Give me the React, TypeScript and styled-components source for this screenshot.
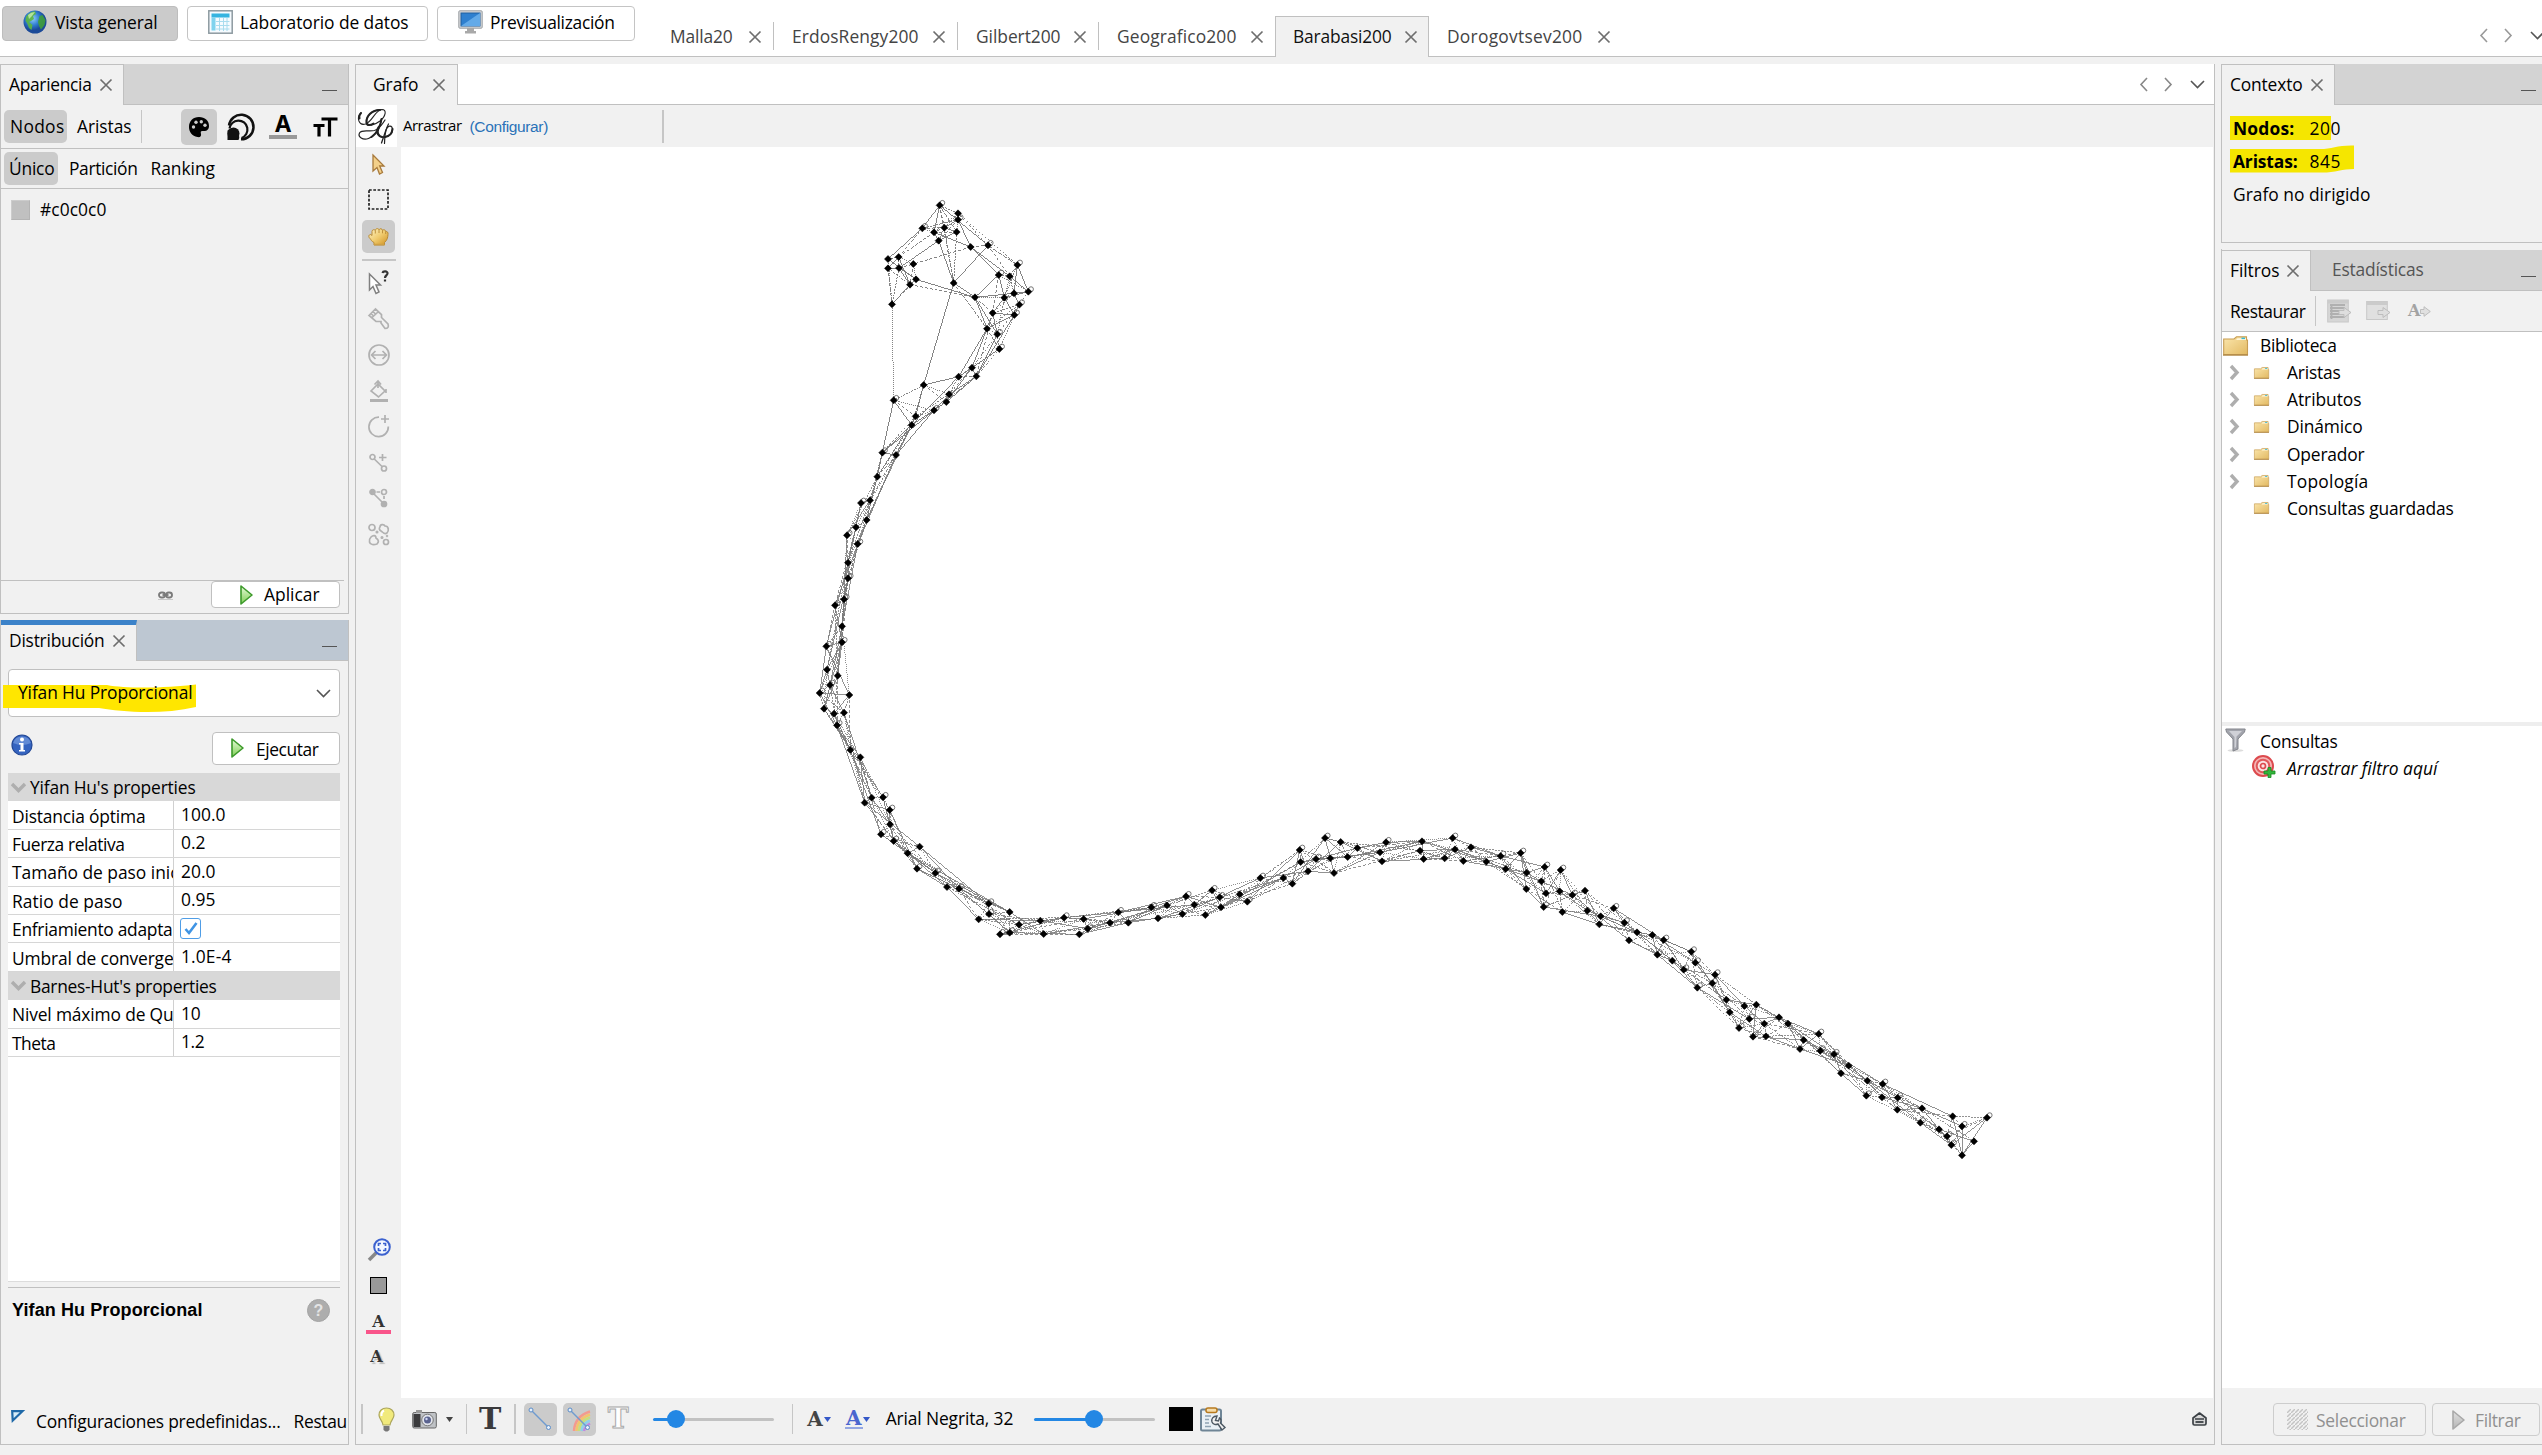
import React, { useLayoutEffect, useRef, useState } from "react";
import styled, { createGlobalStyle } from "styled-components";

const LINE = "#c0c0c0";
const BG = "#f1f1f1";

const Global = createGlobalStyle`
  *, *::before, *::after { box-sizing: border-box; }
  html, body { margin: 0; padding: 0; background: ${BG}; }
  body { overflow: hidden; font-family: "Open Sans", "Noto Sans", sans-serif; font-size: 17.4px; color: #000; }
  svg { display: block; flex: none; overflow: visible; }
`;

/* ---------- text ---------- */

type LabelStyle = { $ml?: number; $color?: string; $bold?: boolean; $italic?: boolean; $arial?: boolean; $size?: number; $dy?: number };

const Text = styled.span<LabelStyle>`
  flex: none;
  white-space: pre;
  line-height: 24px;
  margin-left: ${p => p.$ml ?? 0}px;
  margin-top: ${p => (p.$dy ?? 0) * 2 - 2}px;
  color: ${p => p.$color ?? "#000"};
  font-weight: ${p => (p.$bold ? 700 : 400)};
  font-style: ${p => (p.$italic ? "italic" : "normal")};
  font-size: ${p => p.$size ?? 17.4}px;
  font-family: ${p => (p.$arial ? '"Liberation Sans", Arial, sans-serif' : '"Open Sans", "Noto Sans", sans-serif')};
`;

/* Spreads its letters so that the string takes exactly w pixels. */
function Label({ w, children, ...rest }: LabelStyle & { w: number; children: string }) {
  const ref = useRef<HTMLSpanElement>(null);
  const [spacing, setSpacing] = useState(0);
  useLayoutEffect(() => {
    const el = ref.current;
    if (!el) return;
    const natural = el.getBoundingClientRect().width - spacing * children.length;
    setSpacing((w + 1.5 - natural) / children.length);
  }, [w, children]);
  return (
    <Text ref={ref} {...rest} style={{ letterSpacing: spacing }}>
      {children}
    </Text>
  );
}

/* ---------- shell ---------- */

const Window = styled.div`
  width: 2542px;
  height: 1455px;
  display: flex;
  flex-direction: column;
  overflow: hidden;
  background: ${BG};
`;

const TopBar = styled.header`
  height: 57px;
  flex: none;
  display: flex;
  align-items: flex-start;
  background: #fff;
  box-shadow: inset 0 -1px 0 ${LINE};
`;

const ModeButton = styled.button<{ $w: number; $active?: boolean; $ml: number; $pl: number }>`
  flex: none;
  display: flex;
  align-items: center;
  width: ${p => p.$w}px;
  height: 35px;
  margin: 6px 0 0 ${p => p.$ml}px;
  padding: 0 0 3px ${p => p.$pl}px;
  border: 1.5px solid ${p => (p.$active ? "#bdbdbd" : "#c4c4c4")};
  border-radius: 4px;
  background: ${p => (p.$active ? "#cbcbcb" : "#fff")};
`;

const DocTab = styled.div<{ $w: number; $active?: boolean; $sep?: boolean; $pl: number }>`
  position: relative;
  flex: none;
  display: flex;
  align-items: center;
  width: ${p => p.$w}px;
  height: 41px;
  margin-top: 16px;
  padding-left: ${p => p.$pl}px;
  background: ${p => (p.$active ? BG : "transparent")};
  ${p => p.$active && `border: 1px solid ${LINE}; border-bottom: 0;`}
  &::after {
    content: "";
    display: ${p => (p.$sep ? "block" : "none")};
    position: absolute;
    right: 0;
    top: 6px;
    width: 1px;
    height: 28px;
    background: ${LINE};
  }
`;

const Spacer = styled.div`
  flex: 1;
`;

const NavIcons = styled.div<{ $mt?: number; $mr?: number }>`
  flex: none;
  display: flex;
  align-items: center;
  height: 41px;
  margin-top: ${p => p.$mt ?? 0}px;
  margin-right: ${p => p.$mr ?? 0}px;
`;

const Workspace = styled.main`
  display: grid;
  grid-template-columns: 349px 1860px 321px;
  column-gap: 6px;
  height: 1381px;
  margin-top: 7px;
`;

const Column = styled.div`
  display: flex;
  flex-direction: column;
  gap: 6px;
  min-width: 0;
`;

const Panel = styled.section<{ $h?: number; $open?: boolean }>`
  ${p => (p.$h ? `height: ${p.$h}px; flex: none;` : "flex: 1; min-height: 0;")}
  display: flex;
  flex-direction: column;
  overflow: hidden;
  background: ${BG};
  border: 1px solid ${LINE};
  border-top: 0;
  ${p => p.$open && "border-right: 0;"}
`;

const TabStrip = styled.div<{ $bg: string }>`
  flex: none;
  display: flex;
  height: 41px;
  margin: 0 -1px;
  background: ${p => p.$bg};
  box-shadow: inset 0 -1px 0 ${LINE};
`;

const PanelTab = styled.div<{ $w: number; $focused?: boolean }>`
  flex: none;
  display: flex;
  align-items: center;
  width: ${p => p.$w}px;
  height: 41px;
  background: ${BG};
  border: 1px solid ${LINE};
  border-bottom: 0;
  ${p => p.$focused && "border-top: 5px solid #3b82c9; padding-bottom: 4px;"}
`;

const Minimize = styled.i<{ $mr: number }>`
  flex: none;
  width: 15px;
  height: 1px;
  margin: 26px ${p => p.$mr}px 0 auto;
  background: #555;
`;

const ToolRow = styled.div<{ $h: number; $line?: boolean; $pb?: number }>`
  flex: none;
  display: flex;
  align-items: center;
  height: ${p => p.$h}px;
  padding-bottom: ${p => p.$pb ?? 0}px;
  ${p => p.$line && `border-bottom: 1px solid ${LINE};`}
`;

const Toggle = styled.div<{ $w: number; $h?: number; $ml?: number; $on?: boolean; $pl?: number }>`
  flex: none;
  display: flex;
  align-items: center;
  justify-content: ${p => (p.$pl ? "flex-start" : "center")};
  width: ${p => p.$w}px;
  height: ${p => p.$h ?? 33}px;
  margin-left: ${p => p.$ml ?? 0}px;
  padding-left: ${p => p.$pl ?? 0}px;
  border-radius: 5px;
  background: ${p => (p.$on ? "#cbcbcb" : "transparent")};
`;

const VRule = styled.i<{ $ml: number; $h?: number }>`
  flex: none;
  width: 1.5px;
  height: ${p => p.$h ?? 33}px;
  margin-left: ${p => p.$ml}px;
  background: #c6c6c6;
`;

const IconSlot = styled.span<{ $ml?: number; $mt?: number }>`
  flex: none;
  display: flex;
  margin-left: ${p => p.$ml ?? 0}px;
  margin-top: ${p => p.$mt ?? 0}px;
`;

const PushButton = styled.button<{ $w: number; $h: number; $pl: number; $ml?: number; $disabled?: boolean }>`
  flex: none;
  display: flex;
  align-items: center;
  width: ${p => p.$w}px;
  height: ${p => p.$h}px;
  margin-left: ${p => p.$ml ?? 0}px;
  padding: 0 0 0 ${p => p.$pl}px;
  border: 1px solid ${p => (p.$disabled ? "#cdcdcd" : LINE)};
  border-radius: 4px;
  background: ${p => (p.$disabled ? BG : "#fff")};
`;

/* ---------- left column ---------- */

const Swatch = styled.i`
  width: 19px;
  height: 20px;
  margin-left: 10px;
  background: #c0c0c0;
  border: 1px solid #b4b4b4;
  border-top-color: #ccc;
  border-left-color: #ccc;
`;

const ApplyRow = styled.div`
  flex: none;
  display: flex;
  align-items: flex-start;
  height: 33px;
  margin-right: 4px;
  border-top: 1px solid ${LINE};
`;

const Combo = styled.div`
  position: relative;
  flex: none;
  display: flex;
  align-items: center;
  width: 332px;
  height: 48px;
  margin: 8px 0 0 7px;
  border: 1.5px solid ${LINE};
  border-radius: 4px;
  background: #fff;
`;

const Marker = styled.svg<{ $x: number; $y: number }>`
  position: absolute;
  left: ${p => p.$x}px;
  top: ${p => p.$y}px;
`;

const OverMarker = styled.span`
  position: relative;
  display: flex;
`;

const RunRow = styled.div`
  flex: none;
  display: flex;
  align-items: flex-start;
  height: 56px;
  padding: 15px 0 0 10px;
`;

const Sheet = styled.div`
  flex: none;
  width: 332px;
  height: 509px;
  margin-left: 7px;
  background: #fff;
  border-bottom: 1px solid #dcdcdc;
`;

const GroupRow = styled.div`
  display: flex;
  align-items: center;
  height: 28.4px;
  padding-left: 3px;
  background: #d8d8d8;
`;

const PropRow = styled.div`
  display: grid;
  grid-template-columns: 166px 1fr;
  height: 28.4px;
  border-bottom: 1px solid #d6d6d6;
`;

const PropName = styled.div`
  display: flex;
  align-items: center;
  overflow: hidden;
  padding: 3px 0 0 4px;
  border-right: 1px solid #d0d0d0;
`;

const PropValue = styled.div`
  display: flex;
  align-items: center;
  padding-left: 7px;
`;

const CheckBox = styled.span`
  display: grid;
  place-items: center;
  width: 21px;
  height: 21px;
  margin-left: -1px;
  border: 1.5px solid #4f9de6;
  border-radius: 3px;
  background: #fff;
`;

const Help = styled.div`
  flex: 1;
  display: flex;
  flex-direction: column;
  width: 332px;
  margin: 5px 0 0 7px;
  border-top: 1px solid ${LINE};
`;

const HelpTitle = styled.div`
  display: flex;
  align-items: center;
  height: 45px;
`;

const PresetRow = styled.div`
  flex: none;
  display: flex;
  align-items: center;
  height: 44px;
  padding-left: 10px;
  overflow: hidden;
`;

/* ---------- centre ---------- */

const GraphBody = styled.div`
  flex: none;
  display: grid;
  grid-template-columns: 45px 1fr;
  height: 1293px;
`;

const SideBar = styled.div`
  display: flex;
  flex-direction: column;
  align-items: center;
  background: ${BG};
`;

const LogoBox = styled.div`
  width: 41px;
  height: 42px;
  background: #fff;
`;

const GraphColumn = styled.div`
  display: flex;
  flex-direction: column;
`;

const SideSlot = styled.span<{ $mt: number; $dx?: number }>`
  flex: none;
  display: flex;
  margin-top: ${p => p.$mt}px;
  margin-left: ${p => p.$dx ?? 0}px;
`;

const HRule = styled.i`
  flex: none;
  width: 34px;
  height: 1.5px;
  margin-top: 6px;
  background: #c6c6c6;
`;

const GreySquare = styled.i`
  width: 17px;
  height: 17px;
  background: #999;
  border: 1.5px solid #000;
`;

const Canvas = styled.div`
  flex: 1;
  margin-right: 1px;
  background: #fff;
`;

const SliderTrack = styled.span<{ $ml: number; $fill: number }>`
  position: relative;
  flex: none;
  width: 121px;
  height: 3px;
  margin-left: ${p => p.$ml}px;
  border-radius: 2px;
  background: linear-gradient(to right, #2387e4 ${p => p.$fill}px, #c2c2c2 ${p => p.$fill}px);
  &::after {
    content: "";
    position: absolute;
    left: ${p => p.$fill - 9}px;
    top: -7.5px;
    width: 18px;
    height: 18px;
    border-radius: 50%;
    background: #2387e4;
  }
`;

const Serif = styled.span<{ $size: number; $color: string; $shadow?: boolean; $outline?: boolean; $h?: number }>`
  font-family: "DejaVu Serif", "Liberation Serif", serif;
  font-weight: 700;
  font-size: ${p => p.$size}px;
  line-height: ${p => p.$h ?? p.$size}px;
  color: ${p => p.$color};
  ${p => p.$shadow && "text-shadow: 2px 2px 1px #bbb;"}
  ${p => p.$outline && "-webkit-text-stroke: 1px #a8a8a8;"}
`;

const BlackBox = styled.i<{ $ml: number }>`
  flex: none;
  width: 24px;
  height: 24px;
  margin-left: ${p => p.$ml}px;
  background: #000;
`;

const UnderBar = styled.span<{ $color: string; $w: number; $bar: number }>`
  display: flex;
  flex-direction: column;
  align-items: center;
  width: ${p => p.$w}px;
  border-bottom: ${p => p.$bar}px solid ${p => p.$color};
`;

const AGlyph = styled.span`
  font-family: Inter, "Liberation Sans", sans-serif;
  font-weight: 700;
  font-size: 23px;
  line-height: 21px;
`;

/* ---------- right column ---------- */

const Stats = styled.div`
  display: flex;
  flex-direction: column;
  gap: 9px;
  padding: 12px 0 0 11px;
`;

const StatRow = styled.div`
  position: relative;
  display: flex;
  align-items: center;
  height: 24px;
`;

const Tree = styled.div<{ $h?: number }>`
  ${p => (p.$h ? `height: ${p.$h}px; flex: none;` : "flex: 1;")}
  background: #fff;
`;

const TreeRow = styled.div`
  display: flex;
  align-items: center;
  height: 27.15px;
`;

const TreeCell = styled.span<{ $w: number; $pl: number }>`
  flex: none;
  display: flex;
  width: ${p => p.$w}px;
  padding-left: ${p => p.$pl}px;
`;

const Splitter = styled.i`
  flex: none;
  height: 4px;
  background: #eeeeee;
`;

const FilterActions = styled.div`
  flex: none;
  display: flex;
  height: 56px;
  padding: 15px 0 0 51px;
`;

/* ---------- small icons ---------- */

const Close = ({ color = "#6e6e6e" }: { color?: string }) => (
  <svg width="12" height="12" viewBox="0 0 12 12">
    <path d="M.5.5l11 11M11.500 .5L.5 11.500" stroke={color} strokeWidth="1.700" />
  </svg>
);

const Chevron = ({ dir, color = "#555", bold }: { dir: "left" | "right" | "down"; color?: string; bold?: boolean }) => {
  const d = { left: "M8 1L2 7.500L8 14", right: "M1 1L7 7.500L1 14", down: "M1 1L7.500 7.500L14 1" }[dir];
  return (
    <svg width={dir === "down" ? 15 : 9} height={dir === "down" ? 9 : 15} viewBox={dir === "down" ? "0 0 15 9" : "0 0 9 15"}>
      <path d={d} fill="none" stroke={color} strokeWidth={bold ? 3.400 : 1.600} />
    </svg>
  );
};

const Play = ({ grey }: { grey?: boolean }) => (
  <svg width="13" height="20" viewBox="0 0 13 20">
    <defs>
      <linearGradient id={grey ? "pg" : "pc"} x1="0" x2="0" y1="0" y2="1">
        <stop offset="0" stopColor={grey ? "#e0e0e0" : "#e6fbd8"} />
        <stop offset="1" stopColor={grey ? "#b5b5b5" : "#7fce55"} />
      </linearGradient>
    </defs>
    <path d="M1 1L12 10L1 19Z" fill={`url(#${grey ? "pg" : "pc"})`} stroke={grey ? "#a8a8a8" : "#3d9a2b"} strokeWidth="1.600" strokeLinejoin="round" />
  </svg>
);

const Globe = () => (
  <svg width="24" height="24" viewBox="0 0 24 24">
    <defs>
      <radialGradient id="gl" cx=".4" cy=".35">
        <stop offset="0" stopColor="#8fd0fa" />
        <stop offset=".6" stopColor="#2f7bd0" />
        <stop offset="1" stopColor="#1b4a98" />
      </radialGradient>
    </defs>
    <circle cx="12" cy="12" r="11.500" fill="url(#gl)" />
    <path d="M3 7C4.500 4 8 1.500 12 1.200L13 4L10 6L11 9L8 11L6 12L9.500 15L8.500 20L6 18L4 13L2.500 11Z" fill="#5cb63f" opacity=".9" />
    <path d="M16.500 6L19.500 5L22.500 10L21.500 15L18 19.500L16 16L15 12Z" fill="#3f9f3a" opacity=".9" />
    <path d="M5 5Q8 2 12 2L9 6L6 9Z" fill="#c9efae" opacity=".8" />
  </svg>
);

const TableIcon = () => (
  <svg width="25" height="24" viewBox="0 0 25 24">
    <rect x=".8" y=".8" width="23.400" height="22.400" fill="#f5fbff" stroke="#8d9aa0" strokeWidth="1.500" />
    <rect x="3.500" y="3.500" width="18" height="4" fill="#35b4e0" />
    <rect x="3.500" y="7.500" width="4" height="13" fill="#7fd3ee" />
    <path d="M8 11.500H21.500M8 15.500H21.500M8 19H21.500M11.500 8V21M15.500 8V21M19 8V21" stroke="#a8dcee" strokeWidth="1" />
  </svg>
);

const MonitorIcon = () => (
  <svg width="25" height="24" viewBox="0 0 25 24">
    <rect x=".8" y=".8" width="23.400" height="17.400" rx="1" fill="#d7d9da" stroke="#9a9fa3" />
    <rect x="3" y="3" width="19" height="13" fill="#2f80cf" stroke="#215f9e" />
    <path d="M3 16L22 3V16Z" fill="#63aae8" />
    <path d="M9 18H16V21H18V23.500H7V21H9Z" fill="#a9a9a9" />
  </svg>
);

const Palette = () => (
  <svg width="22" height="22" viewBox="0 0 22 22">
    <path d="M11 1C17 1 21 4.500 21 10C21 14 18 15.500 15 15C12.500 14.700 12.500 16 13 18C13.500 20.500 12 21.500 9.500 21C4 20 1 16 1 11C1 5 5 1 11 1Z" fill="#000" />
    <g fill="#cbcbcb">
      <circle cx="5.500" cy="11" r="1.700" />
      <circle cx="8" cy="6.300" r="1.700" />
      <circle cx="13.300" cy="5.700" r="1.700" />
      <circle cx="17" cy="9.300" r="1.700" />
    </g>
  </svg>
);

const SizeIcon = () => (
  <svg width="28" height="28" viewBox="0 0 28 28" fill="none" stroke="#111" strokeWidth="2.500">
    <path d="M2 12.500A12.300 12.300 0 1 1 14 26.300" />
    <path d="M2.500 15.500A9 9 0 1 1 14.500 25" strokeWidth="2.200" />
    <path d="M.5 27V17.500A7.600 7.600 0 0 1 11.500 27Z" fill="#111" stroke="none" />
    <circle cx="6.500" cy="20.500" r="6" fill="#111" stroke="none" />
  </svg>
);

const SmallTallT = () => (
  <svg width="25" height="20" viewBox="0 0 25 20" stroke="#000" strokeWidth="3.200">
    <path d="M8.500 2H24.500M16.500 2V19.500M.5 8.500H11.500M6 8.500V19.500" />
  </svg>
);

const Chain = () => (
  <svg width="15" height="9" viewBox="0 0 15 9" fill="none" stroke="#7b7b7b" strokeWidth="1.900">
    <rect x="1" y="1.500" width="6" height="5" rx="2.500" />
    <rect x="8" y="1.500" width="6" height="5" rx="2.500" />
    <path d="M4.500 4H10.500" />
    <path d="M0 8.500H15" stroke="#c9c9c9" strokeWidth="1" />
  </svg>
);

const Info = () => (
  <svg width="22" height="22" viewBox="0 0 22 22">
    <circle cx="11" cy="11" r="10" fill="#3564c0" stroke="#234896" strokeWidth="1.200" />
    <path d="M2 9A9.500 9.500 0 0 1 20 9Q11 13 2 9Z" fill="#7fa3e2" opacity=".6" />
    <circle cx="11" cy="5.500" r="2" fill="#fff" />
    <path d="M8 9H12.500V16H14V17.500H8V16H9.500V10.500H8Z" fill="#fff" />
  </svg>
);

const HelpDot = styled.span`
  display: grid;
  place-items: center;
  width: 23px;
  height: 23px;
  margin-left: auto;
  margin-right: 10px;
  border-radius: 50%;
  background: #adadad;
  border: 1px solid #a4a4a4;
  color: #e4e4e4;
  font: 700 16px/20px "Liberation Sans", sans-serif;
`;

const CornerTri = () => (
  <svg width="13" height="12" viewBox="0 0 13 12">
    <path d="M1.200 1.200H11.500L1.700 10.500Z" fill="#d6ecf8" stroke="#1f69a8" strokeWidth="2.200" />
  </svg>
);

const Gephi = () => (
  <svg width="41" height="42" viewBox="0 0 41 42" fill="none" stroke="#222" strokeLinecap="round">
    <path d="M5 8C0 13 3 21 9.500 19C17 16 19 5 26 4.500C31 4.500 30 11 24 16C18 20.500 12 22 10.500 17.500C9.500 11 17 4.500 25 4.500" strokeWidth="1.100" />
    <path d="M24 5C16 5 10 11 10.500 17.500C11 21 14.500 20.500 17.500 18.500" strokeWidth="2.100" />
    <path d="M5 8C3.500 9.500 3 11.500 3.500 13.500" strokeWidth="2" />
    <path d="M25.500 14C24 24 19 31 12.500 33.500C7 35.500 1.500 32 3.500 28C6 24 13 27 18.500 25.500C23 24 26 20 29 15" strokeWidth="1.200" />
    <path d="M25.500 14C24.500 21 21 28 15.500 32" strokeWidth="1.900" />
    <path d="M25 20C20 22 19.500 29 24 31.500C29 33.500 36 30 36.500 25C36.500 20 32 19.500 30 25L25.500 38" strokeWidth="1.300" />
    <path d="M22 24C21 28 22.500 31.500 26 32" strokeWidth="2.100" />
    <path d="M36.500 24C36 28.500 33 31.500 29 32" strokeWidth="2.100" />
    <path d="M32.500 19C28 27 29 33 28.500 38.500" strokeWidth="1.200" />
  </svg>
);

const Arrow = ({ fill, stroke }: { fill: string; stroke: string }) => (
  <svg width="13" height="21" viewBox="0 0 13 21">
    <path d="M1 1L12 12H7.700L10.500 18.500L7.500 20L5 13.500L1 17Z" fill={fill} stroke={stroke} strokeWidth="1.300" />
  </svg>
);

const Marquee = () => (
  <svg width="21" height="21" viewBox="0 0 21 21">
    <rect x="1" y="1" width="19" height="19" fill="none" stroke="#222" strokeWidth="1.700" strokeDasharray="2.700 1.600" />
  </svg>
);

const Hand = () => (
  <svg width="21" height="19" viewBox="0 0 21 19">
    <defs>
      <linearGradient id="hd" x1="0" x2="1" y1="0" y2="1">
        <stop offset="0" stopColor="#fdf3c8" />
        <stop offset=".5" stopColor="#f0cc70" />
        <stop offset="1" stopColor="#d0901f" />
      </linearGradient>
    </defs>
    <path d="M6 18V15.500C3.500 14.500 3 12.500 2 11.500C.2 10 .5 7.500 2.800 7.500L4 8.500V4.500C4 2.500 6.700 2.200 7.300 3.500C7.500 1.200 10.500 1 11 2.800C11.700 1.200 14.200 1.400 14.500 3.300C15.500 2.200 17.500 2.700 17.700 4.500C19.300 4.300 20.300 5.200 20 7.500C19.700 10.500 19.500 13 16.500 15.500V18Z" fill="url(#hd)" stroke="#b98a35" strokeWidth="1" />
    <path d="M7.300 3.500V6.500M11 2.800V6M14.500 3.300V6.300M17.700 4.500V7" stroke="#b98a35" strokeWidth=".9" fill="none" />
    <path d="M6 17.500H16.500" stroke="#cfa045" strokeWidth="1.500" />
  </svg>
);

const CursorHelp = () => (
  <svg width="21" height="25" viewBox="0 0 21 25">
    <path d="M1.500 4L12.500 15H8L11 22L8 23.500L5 16.500L1.500 20Z" fill="#fff" stroke="#808080" strokeWidth="1.500" />
    <path d="M14.500 3C15 .8 19.800 .8 19.500 3.500C19.300 5.500 17 5.500 17 8M17 9.500V11.500" fill="none" stroke="#333" strokeWidth="2.200" />
  </svg>
);

const Grey = styled.svg`
  fill: none;
  stroke: #b1b1b1;
  stroke-width: 1.7;
`;

const Brush = () => (
  <Grey width="22" height="22" viewBox="0 0 22 22">
    <path d="M1 7.500L7.500 1L13.500 6.500V9.500L20 16Q21.500 20.500 17 20.500L13 15V13.500H8Z M3.500 10L10.500 3.500M5 3.500L7.500 6M3 5.500L5 7.500" />
  </Grey>
);
const Sizer = () => (
  <Grey width="22" height="22" viewBox="0 0 22 22">
    <circle cx="11" cy="11" r="10" />
    <path d="M4 11H18M7.500 7L3.500 11L7.500 15M14.500 7L18.500 11L14.500 15" />
  </Grey>
);
const Bucket = () => (
  <Grey width="20" height="22" viewBox="0 0 20 22">
    <path d="M2 11L9 4L16 11L9.500 17Z M9 1V8M5.500 4.500L9 1L12 4.500M17 9V13" />
    <path d="M1 20.500H19" strokeWidth="3" />
  </Grey>
);
const CirclePlus = () => (
  <Grey width="22" height="24" viewBox="0 0 22 24">
    <path d="M11 3.200A9.700 9.700 0 1 0 20.300 12.500M17 1V9M13 5H21" />
  </Grey>
);
const EdgePlus = () => (
  <Grey width="19" height="19" viewBox="0 0 19 19">
    <circle cx="3.500" cy="4" r="2.500" />
    <circle cx="15" cy="15.500" r="2.500" />
    <path d="M5.300 6L13 13.500M13.500 1V8M10 4.500H17.500" />
  </Grey>
);
const PathIcon = () => (
  <Grey width="19" height="20" viewBox="0 0 19 20">
    <circle cx="3.500" cy="4" r="2.500" fill="#b1b1b1" />
    <circle cx="15" cy="4" r="2.500" />
    <circle cx="15" cy="16" r="2.500" fill="#b1b1b1" />
    <path d="M5 6L13 14M7.500 4H11M15 8V11" />
  </Grey>
);
const Blobs = () => (
  <Grey width="22" height="23" viewBox="0 0 22 23">
    <circle cx="4" cy="4.500" r="3" />
    <circle cx="18" cy="19" r="2.500" />
    <circle cx="9" cy="9" r=".7" />
    <circle cx="14" cy="14.500" r=".7" />
    <circle cx="19" cy="13" r=".4" />
    <path d="M12 4C12 1 16 1 17 3C21 3 21 8 19 10C16 12 15 9 13 8C11 7 11 5 12 4ZM3 14C5 12 8 12 8 15C11 17 11 19 9 21C6 22 2 22 1.500 19C1 17 2 15 3 14Z" />
  </Grey>
);

const Magnifier = () => (
  <svg width="24" height="24" viewBox="0 0 24 24" fill="none">
    <path d="M10 14L2 22" stroke="#888" strokeWidth="3.500" />
    <circle cx="15" cy="9" r="7.800" fill="#f2f7ff" stroke="#3b61cf" strokeWidth="2" />
    <path d="M11.500 8V5.500H14M16 5.500H18.500V8M18.500 10V12.500H16M14 12.500H11.500V10" stroke="#3b61cf" strokeWidth="1.700" />
  </svg>
);

const Bulb = () => (
  <svg width="17" height="25" viewBox="0 0 17 25">
    <path d="M8.500 1C13 1 16 4 16 8C16 12 12.500 13.500 12 18H5C4.500 13.500 1 12 1 8C1 4 4 1 8.500 1Z" fill="#f1ea7c" stroke="#aca65c" strokeWidth="1.200" />
    <path d="M6 3.500Q3 5 3.500 9" stroke="#fff" strokeWidth="2" fill="none" />
    <path d="M5.500 19H11.500V23L9.500 24.500H7.500L5.500 23Z" fill="#777" />
  </svg>
);

const Camera = () => (
  <svg width="25" height="20" viewBox="0 0 25 20">
    <rect x=".7" y="3.500" width="23.600" height="15.500" rx="1.500" fill="#bfc2c6" stroke="#666" />
    <rect x="1.500" y="5" width="7" height="13" fill="#3b3b3d" />
    <rect x="4" y="1" width="6" height="3" fill="#999" />
    <circle cx="15.500" cy="11" r="5.800" fill="#e0e3ea" stroke="#777" />
    <circle cx="15.500" cy="11" r="3.500" fill="#5a6390" />
    <circle cx="14.500" cy="10" r="1.200" fill="#cfd6f3" />
  </svg>
);

const EdgeIcon = ({ rainbow }: { rainbow?: boolean }) => (
  <svg width="24" height="24" viewBox="0 0 24 24" fill="none">
    {rainbow && (
      <>
        <path d="M7 24C7.500 15 12 8 23 4.500" stroke="#f39a8f" strokeWidth="2.500" />
        <path d="M9.500 24C10 16 14 10.500 23 7.500" stroke="#f3c46e" strokeWidth="2.500" />
        <path d="M12 24C12.500 17.500 16 13 23 10.500" stroke="#c3e07e" strokeWidth="2.500" />
        <path d="M14.500 24C15 19.500 18 15.500 23 13.500" stroke="#8fd0ea" strokeWidth="2.500" />
        <path d="M17 24C17.500 21 19.500 18.500 23 16.500" stroke="#c08ae0" strokeWidth="2.500" />
      </>
    )}
    <path d="M3 3L20 20" stroke="#6f9bd0" strokeWidth="1.500" />
    <circle cx="3" cy="3" r="2" fill="#e7f0fb" stroke="#5a8cc8" />
    <circle cx="20.500" cy="20.500" r="2" fill="#e7f0fb" stroke="#5a8cc8" />
  </svg>
);

const Caret = ({ color }: { color: string }) => (
  <svg width="7" height="5" viewBox="0 0 7 5">
    <path d="M0 0H7L3.500 5Z" fill={color} />
  </svg>
);

const Clipboard = () => (
  <svg width="26" height="25" viewBox="0 0 26 25">
    <rect x="1" y="2.500" width="20" height="21" rx="1.500" fill="#e9f0f5" stroke="#6f8596" strokeWidth="2" />
    <rect x="6" y="1" width="11" height="4.500" rx="2" fill="#f6dca8" stroke="#b77a1f" strokeWidth="1.500" />
    <path d="M5 9H11M5 12.500H9M5 16H9M5 19.500H11" stroke="#8fa3b3" strokeWidth="1.300" />
    <path d="M17 9C13 9 11 12 12 15C13 17.500 16 18 18 17L22 23L25 20.500L20.500 16C21.500 13 20.500 11.500 19.500 11L18.500 14L15.500 13.500Z" fill="#f2f2f2" stroke="#4d5963" strokeWidth="1.400" />
  </svg>
);

const Eject = () => (
  <svg width="15" height="14" viewBox="0 0 15 14">
    <path d="M7.500 1L14 6V11.500Q14 13 12.500 13H2.500Q1 13 1 11.500V6Z" fill="#d8d8d8" stroke="#3c4146" strokeWidth="1.700" strokeLinejoin="round" />
    <path d="M3 7H12" stroke="#3c4146" strokeWidth="1.500" />
    <path d="M3.500 10H11.500" stroke="#3c4146" strokeWidth="1.800" />
  </svg>
);

const Folder = ({ w, h }: { w: number; h: number }) => (
  <svg width={w} height={h} viewBox="0 0 25 20" preserveAspectRatio="none">
    <defs>
      <linearGradient id="fo" x1="0" x2="1" y1="0" y2="1">
        <stop offset="0" stopColor="#fbe6ac" />
        <stop offset="1" stopColor="#e2b962" />
      </linearGradient>
    </defs>
    <path d="M1 3H11L13.500 .8H23.500V4H24.500V18.500H.7V3Z" fill="url(#fo)" stroke="#c79d53" strokeWidth="1.100" />
    <path d="M13 4H23V2.200H14.500Z" fill="#fff6da" />
    <rect x="18.500" y="1.600" width="3.500" height="1.500" fill="#35b9d8" />
    <path d="M0 19H25" stroke="#b28a47" strokeWidth="1.500" />
  </svg>
);

const ExportTable = ({ plain }: { plain?: boolean }) => (
  <svg width="25" height="24" viewBox="0 0 25 24">
    <rect x=".7" y={plain ? 2.5 : 1} width="20.600" height={plain ? 18 : 22} fill={plain ? "#e0e0e0" : "#d6d6d6"} stroke="#c8c8c8" />
    <rect x=".7" y={plain ? 2.5 : 1} width="20.600" height="3.500" fill="#cbcbcb" />
    {!plain && <path d="M3 6H18M3 9H18M3 12H18M3 15H18M3 18H18M4.500 5V20" stroke="#b0b0b0" strokeWidth="1.800" />}
    <path d="M12 11.500H17V8.500L24 13.500L17 18.500V15.500H12Z" fill="#dedede" stroke="#bdbdbd" />
  </svg>
);

const PlusArrow = () => (
  <svg width="11" height="11" viewBox="0 0 11 11">
    <path d="M.5 3.500H4V.7L10.300 5.500L4 10.300V7.500H.5Z" fill="#e0e0e0" stroke="#bdbdbd" />
  </svg>
);

const Funnel = () => (
  <svg width="21" height="24" viewBox="0 0 21 24">
    <ellipse cx="10.500" cy="22.500" rx="8" ry="1.300" fill="#ddd" />
    <path d="M.8 1H20.200L19.500 4L13 11V21L8 23V11L1.500 4Z" fill="#a2a4ac" stroke="#83858c" />
    <path d="M4 3H17L11.500 8.500L11 19L9.500 20V9Z" fill="#d0d1d7" />
  </svg>
);

const Target = () => (
  <svg width="24" height="23" viewBox="0 0 24 23" fill="none">
    <circle cx="11" cy="11" r="10" fill="#f5b5b5" stroke="#dd4a4e" strokeWidth="2" />
    <circle cx="11" cy="11" r="6.300" stroke="#e0585b" strokeWidth="2" fill="#fbe3e3" />
    <circle cx="11" cy="11" r="2.500" stroke="#dd4a4e" strokeWidth="1.700" />
    <path d="M16 12.500H19V16H23V19H19V22.500H16V19H12V16H16Z" fill="#33b53c" stroke="#168a20" strokeWidth=".8" />
  </svg>
);

const Hatch = () => (
  <svg width="21" height="21" viewBox="0 0 21 21">
    <defs>
      <pattern id="ht" width="4" height="4" patternUnits="userSpaceOnUse">
        <path d="M0 4L4 0" stroke="#c4c4c4" strokeWidth="1.400" />
      </pattern>
    </defs>
    <rect width="21" height="21" fill="url(#ht)" />
  </svg>
);

/* ---------- graph ---------- */

/* Node positions in thirds of a pixel from each stretch's origin; * marks a self-loop. */
const STRETCHES: [number, number, string][] = [
  [800, 180, "419,76* 474,100 474,119* 433,143 402,157 367,145* 470,156 416,182 512,201 564,196* 264,237 296,231 264,265 297,264 340,252 348,298 330,314 276,373 461,309 652,255* 596,285* 629,289 685,335* 642,340 613,353 525,352 658,374* 643,405* 578,399 561,446 592,463* 598,507* 516,563 476,590 529,589 371,615 281,661* 447,643 439,666 402,691* 347,709 335,735 247,818* 288,825 232,890"],
  [780, 440, "270,181 243,189* 260,240 228,262 201,286* 233,312* 204,368 204,415* 192,478* 165,496* 186,559 139,619* 186,607* 141,689 173,707 150,735* 119,759* 208,765 132,806 162,821 192,818 171,856* 211,930 241,952 275,1073 309,1072* 254,1088 329,1110* 330,1153 303,1183* 341,1203* 419,1220 383,1240 411,1286* 466,1299* 501,1341 537,1346*"],
  [900, 840, "266,191* 329,216 267,222* 236,238 357,254* 329,278* 300,283* 421,242 431,282 492,233* 551,237 563,266* 538,283 630,248 655,217* 685,248 754,202* 801,196 774,235 858,169* 883,194 847,222 936,151* 959,172* 916,225 963,202 1019,163 1042,185* 1081,114* 1150,114 1177,131"],
  [1270, 800, "89,150* 92,186 114,214 138,177* 181,175 165,114* 192,219 212,126 233,171 262,144 330,157 348,127* 336,184 450,152 456,124 461,177 524,175* 548,114* 555,148 580,183 603,142 649,185 692,168* 707,207* 752,159* 770,218 769,267 824,201* 814,244 828,280 821,321* 872,210* 869,274 877,336 907,285* 945,272 952,332 992,349 988,373 1031,325* 1063,368* 1077,421 1101,397 1147,405 1162,464* 1181,420*"],
  [1600, 900, "217,182 251,209* 274,155* 286,188* 292,263* 337,250* 345,224* 379,299 389,337 417,384* 433,318 448,357* 469,314 459,410* 493,371 498,409 537,352 564,371 600,447 611,420 656,402* 661,452* 702,463* 723,520 746,497 799,587* 802,542 846,592 848,552* 892,629 893,593* 961,668* 966,625 1017,688 1041,709* 1058,649 1054,735* 1086,679* 1086,766 1122,724 1161,653*"],
];

const HEAD_EDGES =
  "0-1 0-2 0-3 0-4 0-5 0-18 0-6 0-9 1-2 1-3 1-4 1-9 1-19 2-7 2-8 2-3 2-5 2-6 3-4 3-6 3-7 3-18 4-5 4-6 4-7 4-8 4-11 5-10 5-3 6-7 6-18 7-18 7-13 8-9 8-20 8-14 8-21 9-18 9-21 9-19 10-11 10-12 10-13 10-17 10-15 11-5 11-13 11-14 11-16 11-12 12-13 12-17 12-16 13-14 13-16 13-17 13-15 14-15 14-16 15-17 15-16 15-25 16-25 16-17 17-36 18-35 18-25 18-29 19-21 19-22 19-23 19-24 20-21 20-25 20-24 20-28 20-22 21-23 21-22 21-24 22-23 22-26 22-24 23-24 23-26 23-25 23-28 24-25 24-28 24-27 24-30 25-28 25-29 25-30 26-27 26-28 26-29 26-30 27-28 27-31 27-29 28-29 28-30 29-30 29-32 29-33 29-31 30-31 30-32 30-34 28-34 27-34 31-34 31-32 31-33 32-33 32-34 32-37 33-34 33-35 33-37 34-37 34-38 34-39 32-38 35-36 35-37 35-40 35-41 35-38 36-40 36-41 36-39 36-42 37-38 37-39 37-40 33-41 38-39 38-41 39-40 39-41 40-41 39-42 39-43 40-42 40-43 41-42 41-43 40-44 41-44 42-43 42-44 43-44";

type Node = { x: number; y: number; loop: boolean };

const NODES: Node[] = STRETCHES.flatMap(([ox, oy, pts]) =>
  pts.split(" ").map(p => {
    const [x, y] = p.replace("*", "").split(",").map(Number);
    return { x: ox + x / 3, y: oy + y / 3, loop: p.endsWith("*") };
  })
);

const HEAD: [number, number][] = HEAD_EDGES.split(" ").map(e => e.split("-").map(Number) as [number, number]);

/* Along the tail every node reaches a few of the nodes that follow it. */
const REACH = [
  [1, 3, 5, 6],
  [1, 2, 4, 6],
  [2, 3, 5],
  [1, 4, 5, 7],
];
const TAIL: [number, number][] = NODES.flatMap((_, i) =>
  i < 41 ? [] : REACH[i % 4].map(k => [i, i + k] as [number, number]).filter(([, j]) => j > 44 && j < NODES.length)
);

const DASHES = ["none", "2 1", "1 1", "3 2", "none"];

const Edges = ({ list, width }: { list: [number, number][]; width: number }) => (
  <g stroke="#777" strokeWidth={width} fill="none" shapeRendering="crispEdges">
    {list.map(([a, b], i) => (
      <line key={i} x1={NODES[a].x} y1={NODES[a].y} x2={NODES[b].x} y2={NODES[b].y} strokeDasharray={DASHES[(a * 3 + b) % 5]} />
    ))}
  </g>
);

const Graph = () => (
  <svg width="1812" height="1251" viewBox="401 147 1812 1251">
    <Edges list={HEAD} width={0.9} />
    <Edges list={TAIL} width={0.8} />
    <g stroke="#666" strokeWidth=".9" fill="none">
      {NODES.filter(n => n.loop).map((n, i) => (
        <circle key={i} cx={n.x + 2.700} cy={n.y - 2.500} r="2.400" />
      ))}
    </g>
    <path d={NODES.map(n => `M${n.x} ${n.y - 3.5}l3.5 3.5l-3.5 3.5l-3.5 -3.5z`).join("")} fill="#000" stroke="#000" strokeWidth=".6" />
  </svg>
);

/* ---------- data ---------- */

const DOCS = [
  { name: "Malla20", w: 61, tab: 121, pl: 17, x: 16, sep: true },
  { name: "ErdosRengy200", w: 125, tab: 184, pl: 18, x: 14, sep: true },
  { name: "Gilbert200", w: 83, tab: 141, pl: 18, x: 13, sep: true },
  { name: "Geografico200", w: 118, tab: 176, pl: 18, x: 14 },
  { name: "Barabasi200", w: 97, tab: 154, pl: 17, x: 13, active: true },
  { name: "Dorogovtsev200", w: 134, tab: 184, pl: 18, x: 15 },
];

const PROPS_YIFAN: [string, number, string, number][] = [
  ["Distancia óptima", 132, "100.0", 43],
  ["Fuerza relativa", 111, "0.2", 23],
  ["Tamaño de paso inic", 165, "20.0", 33],
  ["Ratio de paso", 109, "0.95", 33],
  ["Enfriamiento adapta", 159, "", 0],
  ["Umbral de converge", 160, "1.0E-4", 49],
];

const PROPS_BARNES: [string, number, string, number][] = [
  ["Nivel máximo de Qu", 160, "10", 18],
  ["Theta", 42, "1.2", 22],
];

const FOLDERS: [string, number, boolean][] = [
  ["Aristas", 52, true],
  ["Atributos", 73, true],
  ["Dinámico", 74, true],
  ["Operador", 76, true],
  ["Topología", 80, true],
  ["Consultas guardadas", 165, false],
];

const Property = ({ row: [name, nw, value, vw] }: { row: [string, number, string, number] }) => (
  <PropRow>
    <PropName>
      <Label w={nw}>{name}</Label>
    </PropName>
    <PropValue>
      {value ? (
        <Label w={vw}>{value}</Label>
      ) : (
        <CheckBox>
          <svg width="14" height="13" viewBox="0 0 14 13">
            <path d="M1.500 7L5 11L12.500 1" fill="none" stroke="#3f94e4" strokeWidth="2.600" />
          </svg>
        </CheckBox>
      )}
    </PropValue>
  </PropRow>
);

/* ---------- page ---------- */

export default function App() {
  return (
    <Window>
      <Global />
      <TopBar>
        <ModeButton $w={176} $ml={2} $pl={20} $active>
          <Globe />
          <Label w={101} $ml={8} $dy={1}>Vista general</Label>
        </ModeButton>
        <ModeButton $w={241} $ml={9} $pl={20}>
          <TableIcon />
          <Label w={167} $ml={7} $dy={1}>Laboratorio de datos</Label>
        </ModeButton>
        <ModeButton $w={198} $ml={9} $pl={20}>
          <MonitorIcon />
          <Label w={123} $ml={7} $dy={1}>Previsualización</Label>
        </ModeButton>
        <IconSlot $ml={18} />
        {DOCS.map(d => (
          <DocTab key={d.name} $w={d.tab} $pl={d.pl} $active={d.active} $sep={d.sep}>
            <Label w={d.w} $color={d.active ? "#111" : "#444"}>{d.name}</Label>
            <IconSlot $ml={d.x}>
              <Close />
            </IconSlot>
          </DocTab>
        ))}
        <Spacer />
        <NavIcons $mt={15} $mr={-3}>
          <Chevron dir="left" color="#999" />
          <IconSlot $ml={16}><Chevron dir="right" color="#999" /></IconSlot>
          <IconSlot $ml={17}><Chevron dir="down" /></IconSlot>
        </NavIcons>
      </TopBar>

      <Workspace>
        <Column>
          <Panel $h={550}>
            <TabStrip $bg="#d3d3d3">
              <PanelTab $w={124}>
                <Label w={81} $ml={8}>Apariencia</Label>
                <IconSlot $ml={8}><Close /></IconSlot>
              </PanelTab>
              <Minimize $mr={12} />
            </TabStrip>
            <ToolRow $h={44} $line>
              <Toggle $w={63} $ml={3} $pl={6} $on><Label w={53}>Nodos</Label></Toggle>
              <Label w={53} $ml={10}>Aristas</Label>
              <VRule $ml={9} />
              <Toggle $w={36} $h={36} $ml={39} $on><Palette /></Toggle>
              <IconSlot $ml={10}><SizeIcon /></IconSlot>
              <IconSlot $ml={14}><UnderBar $w={28} $bar={4} $color="#999"><AGlyph>A</AGlyph></UnderBar></IconSlot>
              <IconSlot $ml={16}><SmallTallT /></IconSlot>
            </ToolRow>
            <ToolRow $h={40} $line>
              <Toggle $w={54} $ml={3} $pl={5} $on><Label w={44}>Único</Label></Toggle>
              <Label w={67} $ml={11}>Partición</Label>
              <Label w={63} $ml={13}>Ranking</Label>
            </ToolRow>
            <ToolRow $h={42}>
              <Swatch />
              <Label w={65} $ml={10}>#c0c0c0</Label>
            </ToolRow>
            <Spacer />
            <ApplyRow>
              <IconSlot $ml={157} $mt={10}><Chain /></IconSlot>
              <PushButton $w={129} $h={27} $pl={28} $ml={38}>
                <Play />
                <Label w={54} $ml={11}>Aplicar</Label>
              </PushButton>
            </ApplyRow>
          </Panel>

          <Panel>
            <TabStrip $bg="#bdc7d2">
              <PanelTab $w={137} $focused>
                <Label w={94} $ml={8}>Distribución</Label>
                <IconSlot $ml={8}><Close /></IconSlot>
              </PanelTab>
              <Minimize $mr={12} />
            </TabStrip>
            <Combo>
              <Marker $x={-7} $y={13} width="196" height="30" viewBox="0 0 196 30">
                <path d="M1 2H105C125 6 165 5 194 1.500V24C160 32 120 29 97 25H1Z" fill="#ffe600" />
              </Marker>
              <OverMarker><Label w={173} $ml={9}>Yifan Hu Proporcional</Label></OverMarker>
              <IconSlot $ml={123}><Chevron dir="down" /></IconSlot>
            </Combo>
            <RunRow>
              <IconSlot $mt={2}><Info /></IconSlot>
              <PushButton $w={128} $h={33} $pl={18} $ml={179}>
                <IconSlot $mt={-2}><Play /></IconSlot>
                <Label w={61} $ml={12} $dy={1}>Ejecutar</Label>
              </PushButton>
            </RunRow>
            <Sheet>
              <GroupRow>
                <Chevron dir="down" color="#aeaeae" bold />
                <Label w={164} $ml={4} $dy={1}>Yifan Hu's properties</Label>
              </GroupRow>
              {PROPS_YIFAN.map(r => <Property key={r[0]} row={r} />)}
              <GroupRow>
                <Chevron dir="down" color="#aeaeae" bold />
                <Label w={185} $ml={4} $dy={1}>Barnes-Hut's properties</Label>
              </GroupRow>
              {PROPS_BARNES.map(r => <Property key={r[0]} row={r} />)}
            </Sheet>
            <Help>
              <HelpTitle>
                <Label w={189} $ml={4} $bold $arial $size={18}>Yifan Hu Proporcional</Label>
                <HelpDot>?</HelpDot>
              </HelpTitle>
            </Help>
            <PresetRow>
              <IconSlot $mt={-12}><CornerTri /></IconSlot>
              <Label w={243} $ml={12}>Configuraciones predefinidas...</Label>
              <Label w={52} $ml={13}>Restau</Label>
            </PresetRow>
          </Panel>
        </Column>

        <Column>
          <Panel>
            <TabStrip $bg="#fff">
              <PanelTab $w={103}>
                <Label w={44} $ml={17}>Grafo</Label>
                <IconSlot $ml={14}><Close /></IconSlot>
              </PanelTab>
              <Spacer />
              <NavIcons $mr={10}>
                <Chevron dir="left" color="#888" />
                <IconSlot $ml={16}><Chevron dir="right" color="#888" /></IconSlot>
                <IconSlot $ml={17}><Chevron dir="down" /></IconSlot>
              </NavIcons>
            </TabStrip>
            <GraphBody>
              <SideBar>
                <SideSlot $mt={0} $dx={-4}><LogoBox><Gephi /></LogoBox></SideSlot>
                <SideSlot $mt={7}><Arrow fill="#f3d08a" stroke="#a87a3c" /></SideSlot>
                <SideSlot $mt={14}><Marquee /></SideSlot>
                <SideSlot $mt={10}><Toggle $w={33} $on><Hand /></Toggle></SideSlot>
                <HRule />
                <SideSlot $mt={9}><CursorHelp /></SideSlot>
                <SideSlot $mt={13}><Brush /></SideSlot>
                <SideSlot $mt={14}><Sizer /></SideSlot>
                <SideSlot $mt={14}><Bucket /></SideSlot>
                <SideSlot $mt={12}><CirclePlus /></SideSlot>
                <SideSlot $mt={15}><EdgePlus /></SideSlot>
                <SideSlot $mt={16}><PathIcon /></SideSlot>
                <SideSlot $mt={15}><Blobs /></SideSlot>
                <Spacer />
                <SideSlot $mt={0} $dx={1}><Magnifier /></SideSlot>
                <SideSlot $mt={15}><GreySquare /></SideSlot>
                <SideSlot $mt={19}>
                  <UnderBar $w={25} $bar={4} $color="#f9558a"><Serif $size={16} $h={17} $color="#333">A</Serif></UnderBar>
                </SideSlot>
                <SideSlot $mt={13} $dx={-4}><Serif $size={16} $h={19} $color="#333" $shadow>A</Serif></SideSlot>
                <SideSlot $mt={32} />
              </SideBar>
              <GraphColumn>
                <ToolRow $h={42}>
                  <Label w={57} $ml={2} $size={15}>Arrastrar</Label>
                  <Label w={77} $ml={8} $size={15.5} $arial $color="#2a72b8" $dy={1.5}>(Configurar)</Label>
                  <VRule $ml={114} />
                </ToolRow>
                <Canvas><Graph /></Canvas>
              </GraphColumn>
            </GraphBody>
            <ToolRow $h={46} $pb={4}>
              <VRule $ml={5} $h={30} />
              <IconSlot $ml={15}><Bulb /></IconSlot>
              <IconSlot $ml={17}><Camera /></IconSlot>
              <IconSlot $ml={9}><Caret color="#444" /></IconSlot>
              <VRule $ml={13} $h={30} />
              <IconSlot $ml={12}><Serif $size={30} $h={30} $color="#3a3a3c">T</Serif></IconSlot>
              <VRule $ml={13} $h={30} />
              <Toggle $w={33} $ml={8} $on><EdgeIcon /></Toggle>
              <Toggle $w={33} $ml={6} $on><EdgeIcon rainbow /></Toggle>
              <IconSlot $ml={12}><Serif $size={28} $h={30} $color="#fff" $outline>T</Serif></IconSlot>
              <SliderTrack $ml={24} $fill={23} />
              <VRule $ml={18} $h={30} />
              <IconSlot $ml={14}><Serif $size={20} $color="#444">A</Serif></IconSlot>
              <IconSlot $ml={1}><Caret color="#3558c8" /></IconSlot>
              <IconSlot $ml={14}><UnderBar $w={18} $bar={2} $color="#93a6e2"><Serif $size={20} $h={17} $color="#4a66cf">A</Serif></UnderBar></IconSlot>
              <IconSlot $ml={0}><Caret color="#3558c8" /></IconSlot>
              <Label w={126} $ml={16}>Arial Negrita, 32</Label>
              <SliderTrack $ml={21} $fill={60} />
              <BlackBox $ml={14} />
              <IconSlot $ml={7}><Clipboard /></IconSlot>
              <Spacer />
              <Eject />
              <IconSlot $ml={7} />
            </ToolRow>
          </Panel>
        </Column>

        <Column>
          <Panel $h={179} $open>
            <TabStrip $bg="#d3d3d3">
              <PanelTab $w={114}>
                <Label w={71} $ml={8}>Contexto</Label>
                <IconSlot $ml={8}><Close /></IconSlot>
              </PanelTab>
              <Minimize $mr={7} />
            </TabStrip>
            <Stats>
              <StatRow>
                <Marker $x={-3} $y={-1} width="102" height="24"><rect width="101" height="24" fill="#f5e600" /></Marker>
                <OverMarker><Label w={60} $bold>Nodos:</Label></OverMarker>
                <OverMarker><Label w={30} $ml={15}>200</Label></OverMarker>
              </StatRow>
              <StatRow>
                <Marker $x={-3} $y={-5} width="124" height="28" viewBox="0 0 124 28">
                  <path d="M0 4H90C102 4 108 0 124 .5V24C112 24 104 28 90 27.500H0Z" fill="#f5e600" />
                </Marker>
                <OverMarker><Label w={63} $bold>Aristas:</Label></OverMarker>
                <OverMarker><Label w={30} $ml={12}>845</Label></OverMarker>
              </StatRow>
              <StatRow><Label w={136}>Grafo no dirigido</Label></StatRow>
            </Stats>
          </Panel>

          <Panel $open>
            <IconSlot $mt={1} />
            <TabStrip $bg="#d3d3d3">
              <PanelTab $w={90}>
                <Label w={48} $ml={8}>Filtros</Label>
                <IconSlot $ml={7}><Close /></IconSlot>
              </PanelTab>
              <Label w={90} $ml={21} $color="#555" $dy={4.5}>Estadísticas</Label>
              <Minimize $mr={7} />
            </TabStrip>
            <ToolRow $h={41} $line>
              <Label w={74} $ml={8} $dy={0.5}>Restaurar</Label>
              <VRule $ml={9} $h={30} />
              <IconSlot $ml={11}><ExportTable /></IconSlot>
              <IconSlot $ml={14}><ExportTable plain /></IconSlot>
              <IconSlot $ml={17}><Serif $size={16} $color="#a3a3a3">A</Serif></IconSlot>
              <PlusArrow />
            </ToolRow>
            <Tree $h={390}>
              <TreeRow>
                <TreeCell $w={38} $pl={1}><Folder w={25} h={20} /></TreeCell>
                <Label w={75} $dy={0.5}>Biblioteca</Label>
              </TreeRow>
              {FOLDERS.map(([name, w, open]) => (
                <TreeRow key={name}>
                  <TreeCell $w={32} $pl={8}>{open && <Chevron dir="right" color="#aeaeae" bold />}</TreeCell>
                  <TreeCell $w={33} $pl={0}><Folder w={15} h={12} /></TreeCell>
                  <Label w={w} $dy={0.5}>{name}</Label>
                </TreeRow>
              ))}
            </Tree>
            <Splitter />
            <Tree>
              <TreeRow>
                <TreeCell $w={38} $pl={3}><Funnel /></TreeCell>
                <Label w={76} $dy={2}>Consultas</Label>
              </TreeRow>
              <TreeRow>
                <TreeCell $w={65} $pl={30}><Target /></TreeCell>
                <Label w={149} $italic $dy={2}>Arrastrar filtro aquí</Label>
              </TreeRow>
            </Tree>
            <FilterActions>
              <PushButton $w={153} $h={33} $pl={13} $disabled>
                <Hatch />
                <Label w={88} $ml={8} $color="#909090" $dy={1}>Seleccionar</Label>
              </PushButton>
              <PushButton $w={108} $h={33} $pl={19} $ml={6} $disabled>
                <Play grey />
                <Label w={44} $ml={10} $color="#909090" $dy={1}>Filtrar</Label>
              </PushButton>
            </FilterActions>
          </Panel>
        </Column>
      </Workspace>
    </Window>
  );
}
